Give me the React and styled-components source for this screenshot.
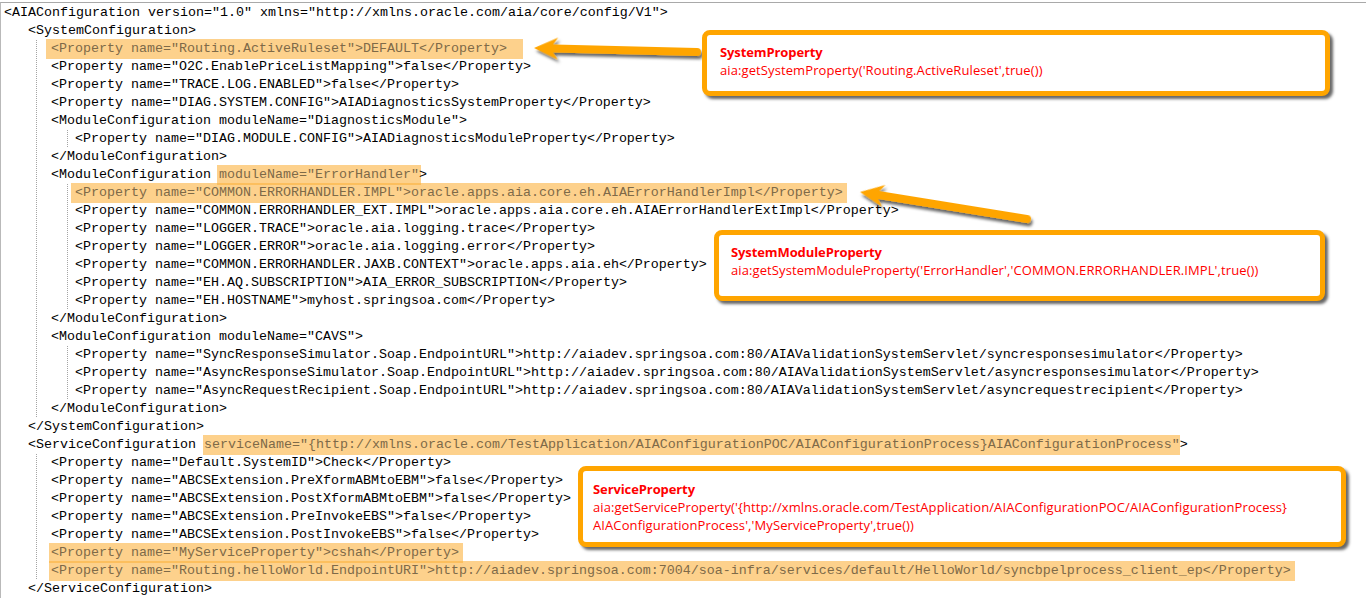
import React from 'react'
import styled, { createGlobalStyle } from 'styled-components'

const GlobalStyle = createGlobalStyle`
  html, body {
    margin: 0;
    padding: 0;
    background: #ffffff;
  }
`

const LEVEL_X = [3, 27, 50, 74]

// each line: level, indent guides (x positions), parts
// a part is a string or { hl: text, l: pad left, r: pad right }
const LINES = [
  { lv: 0, g: [], parts: ['<AIAConfiguration version="1.0" xmlns="http://xmlns.oracle.com/aia/core/config/V1">'] },
  { lv: 1, g: [], parts: ['<SystemConfiguration>'] },
  { lv: 2, g: [36], parts: [{ hl: '<Property name="Routing.ActiveRuleset">DEFAULT</Property>', l: 5, r: 16 }] },
  { lv: 2, g: [36], parts: ['<Property name="O2C.EnablePriceListMapping">false</Property>'] },
  { lv: 2, g: [36], parts: ['<Property name="TRACE.LOG.ENABLED">false</Property>'] },
  { lv: 2, g: [36], parts: ['<Property name="DIAG.SYSTEM.CONFIG">AIADiagnosticsSystemProperty</Property>'] },
  { lv: 2, g: [36], parts: ['<ModuleConfiguration moduleName="DiagnosticsModule">'] },
  { lv: 3, g: [36, 67], parts: ['<Property name="DIAG.MODULE.CONFIG">AIADiagnosticsModuleProperty</Property>'] },
  { lv: 2, g: [36], parts: ['</ModuleConfiguration>'] },
  { lv: 2, g: [36], parts: ['<ModuleConfiguration ', { hl: 'moduleName="ErrorHandler"', l: 2, r: 2 }, '>'] },
  { lv: 3, g: [36, 67], parts: [{ hl: '<Property name="COMMON.ERRORHANDLER.IMPL">oracle.apps.aia.core.eh.AIAErrorHandlerImpl</Property>', l: 4, r: 4 }] },
  { lv: 3, g: [36, 67], parts: ['<Property name="COMMON.ERRORHANDLER_EXT.IMPL">oracle.apps.aia.core.eh.AIAErrorHandlerExtImpl</Property>'] },
  { lv: 3, g: [36, 67], parts: ['<Property name="LOGGER.TRACE">oracle.aia.logging.trace</Property>'] },
  { lv: 3, g: [36, 67], parts: ['<Property name="LOGGER.ERROR">oracle.aia.logging.error</Property>'] },
  { lv: 3, g: [36, 67], parts: ['<Property name="COMMON.ERRORHANDLER.JAXB.CONTEXT">oracle.apps.aia.eh</Property>'] },
  { lv: 3, g: [36, 67], parts: ['<Property name="EH.AQ.SUBSCRIPTION">AIA_ERROR_SUBSCRIPTION</Property>'] },
  { lv: 3, g: [36, 67], parts: ['<Property name="EH.HOSTNAME">myhost.springsoa.com</Property>'] },
  { lv: 2, g: [36], parts: ['</ModuleConfiguration>'] },
  { lv: 2, g: [36], parts: ['<ModuleConfiguration moduleName="CAVS">'] },
  { lv: 3, g: [36, 67], parts: ['<Property name="SyncResponseSimulator.Soap.EndpointURL">http://aiadev.springsoa.com:80/AIAValidationSystemServlet/syncresponsesimulator</Property>'] },
  { lv: 3, g: [36, 67], parts: ['<Property name="AsyncResponseSimulator.Soap.EndpointURL">http://aiadev.springsoa.com:80/AIAValidationSystemServlet/asyncresponsesimulator</Property>'] },
  { lv: 3, g: [36, 67], parts: ['<Property name="AsyncRequestRecipient.Soap.EndpointURL">http://aiadev.springsoa.com:80/AIAValidationSystemServlet/asyncrequestrecipient</Property>'] },
  { lv: 2, g: [36], parts: ['</ModuleConfiguration>'] },
  { lv: 1, g: [], parts: ['</SystemConfiguration>'] },
  { lv: 1, g: [], parts: ['<ServiceConfiguration ', { hl: 'serviceName="{http://xmlns.oracle.com/TestApplication/AIAConfigurationPOC/AIAConfigurationProcess}AIAConfigurationProcess"', l: 1, r: 0 }, '>'] },
  { lv: 2, g: [36], parts: ['<Property name="Default.SystemID">Check</Property>'] },
  { lv: 2, g: [36], parts: ['<Property name="ABCSExtension.PreXformABMtoEBM">false</Property>'] },
  { lv: 2, g: [36], parts: ['<Property name="ABCSExtension.PostXformABMtoEBM">false</Property>'] },
  { lv: 2, g: [36], parts: ['<Property name="ABCSExtension.PreInvokeEBS">false</Property>'] },
  { lv: 2, g: [36], parts: ['<Property name="ABCSExtension.PostInvokeEBS">false</Property>'] },
  { lv: 2, g: [36], parts: [{ hl: '<Property name="MyServiceProperty">cshah</Property>', l: 2, r: 4 }] },
  { lv: 2, g: [36], parts: [{ hl: '<Property name="Routing.helloWorld.EndpointURI">http://aiadev.springsoa.com:7004/soa-infra/services/default/HelloWorld/syncbpelprocess_client_ep</Property>', l: 2, r: 4 }] },
  { lv: 1, g: [], parts: ['</ServiceConfiguration>'] },
]

const Frame = styled.div`
  position: relative;
  width: 1366px;
  height: 598px;
  overflow: hidden;
  background: #ffffff;
`

const Editor = styled.div`
  margin-top: 2px;
  padding-top: 1px;
  height: 596px;
  border-top: 1px solid #a9a9a9;
  border-left: 1px solid #b9b9b9;
  box-sizing: border-box;
  font-family: "Liberation Mono", "Courier New", monospace;
  font-size: 13.33px;
  color: #000000;
`

const Line = styled.div`
  height: 18px;
  line-height: 18px;
  white-space: pre;
  padding-left: ${p => p.$x}px;
  background-image: ${p => p.$guides.length
    ? p.$guides.map(() => 'linear-gradient(#a4a4a4 50%, transparent 50%)').join(', ')
    : 'none'};
  background-size: 1px 2px;
  background-repeat: repeat-y;
  background-position: ${p => p.$guides.map(g => `${g - 1}px 0`).join(', ')};
`

const Mark = styled.span`
  display: inline-block;
  height: 20px;
  margin-top: -1px;
  vertical-align: top;
  line-height: 20px;
  margin-left: -${p => p.$l}px;
  padding-left: ${p => p.$l}px;
  margin-right: -${p => p.$r}px;
  padding-right: ${p => p.$r}px;
  background: rgba(252, 178, 64, 0.6);
  color: #7e6a48;
`

const Callout = styled.div`
  position: absolute;
  left: ${p => p.$x}px;
  top: ${p => p.$y}px;
  width: ${p => p.$w}px;
  height: ${p => p.$h}px;
  box-sizing: border-box;
  border: 5px solid #ffa500;
  border-radius: 8px;
  background: #ffffff;
  box-shadow: 3px 3px 3px rgba(0, 0, 0, 0.6);
  padding: ${p => p.$pt}px 10px 0 ${p => p.$pl}px;
  font-family: "Open Sans", "Noto Sans", sans-serif;
  font-size: 13px;
  line-height: 18px;
  letter-spacing: 0.1px;
  color: #ff0000;
  white-space: pre;
`

const CalloutTitle = styled.div`
  font-weight: 700;
  letter-spacing: -0.1px;
`

const Arrows = styled.svg`
  position: absolute;
  left: 0;
  top: 0;
  pointer-events: none;
`

function Arrow({ tipX, tipY, tailX, tailY }) {
  const dx = tailX - tipX
  const dy = tailY - tipY
  const len = Math.sqrt(dx * dx + dy * dy)
  const angle = (Math.atan2(dy, dx) * 180) / Math.PI
  const d = `M0 0 L24 -11 L19 -4 L${len} -4 A4 4 0 0 1 ${len} 4 L19 4 L24 11 Z`
  return (
    <path
      d={d}
      fill="#ffa500"
      filter="url(#arrowShadow)"
      transform={`translate(${tipX} ${tipY}) rotate(${angle})`}
    />
  )
}

export default function App() {
  return (
    <Frame>
      <GlobalStyle />
      <Editor>
        {LINES.map((line, i) => (
          <Line key={i} $x={LEVEL_X[line.lv]} $guides={line.g}>
            {line.parts.map((part, j) =>
              typeof part === 'string'
                ? <React.Fragment key={j}>{part}</React.Fragment>
                : <Mark key={j} $l={part.l} $r={part.r}>{part.hl}</Mark>
            )}
          </Line>
        ))}
      </Editor>

      <Arrows width="1366" height="598" viewBox="0 0 1366 598">
        <defs>
          <filter id="arrowShadow" x="-10%" y="-50%" width="120%" height="200%">
            <feDropShadow dx="2" dy="3" stdDeviation="1.6" floodColor="#000" floodOpacity="0.6" />
          </filter>
        </defs>
        <Arrow tipX={534} tipY={48} tailX={697} tailY={52} />
        <Arrow tipX={860} tipY={192} tailX={1027} tailY={219} />
      </Arrows>

      <Callout $x={702} $y={30} $w={628} $h={66} $pt={8} $pl={13}>
        <CalloutTitle>SystemProperty</CalloutTitle>
        {"aia:getSystemProperty('Routing.ActiveRuleset',true())"}
      </Callout>

      <Callout $x={714} $y={230} $w={611} $h={71} $pt={8} $pl={12}>
        <CalloutTitle>SystemModuleProperty</CalloutTitle>
        {"aia:getSystemModuleProperty('ErrorHandler','COMMON.ERRORHANDLER.IMPL',true())"}
      </Callout>

      <Callout $x={578} $y={466} $w={768} $h={81} $pt={9} $pl={10}>
        <CalloutTitle>ServiceProperty</CalloutTitle>
        {"aia:getServiceProperty('{http://xmlns.oracle.com/TestApplication/AIAConfigurationPOC/AIAConfigurationProcess}\nAIAConfigurationProcess','MyServiceProperty',true())"}
      </Callout>
    </Frame>
  )
}
